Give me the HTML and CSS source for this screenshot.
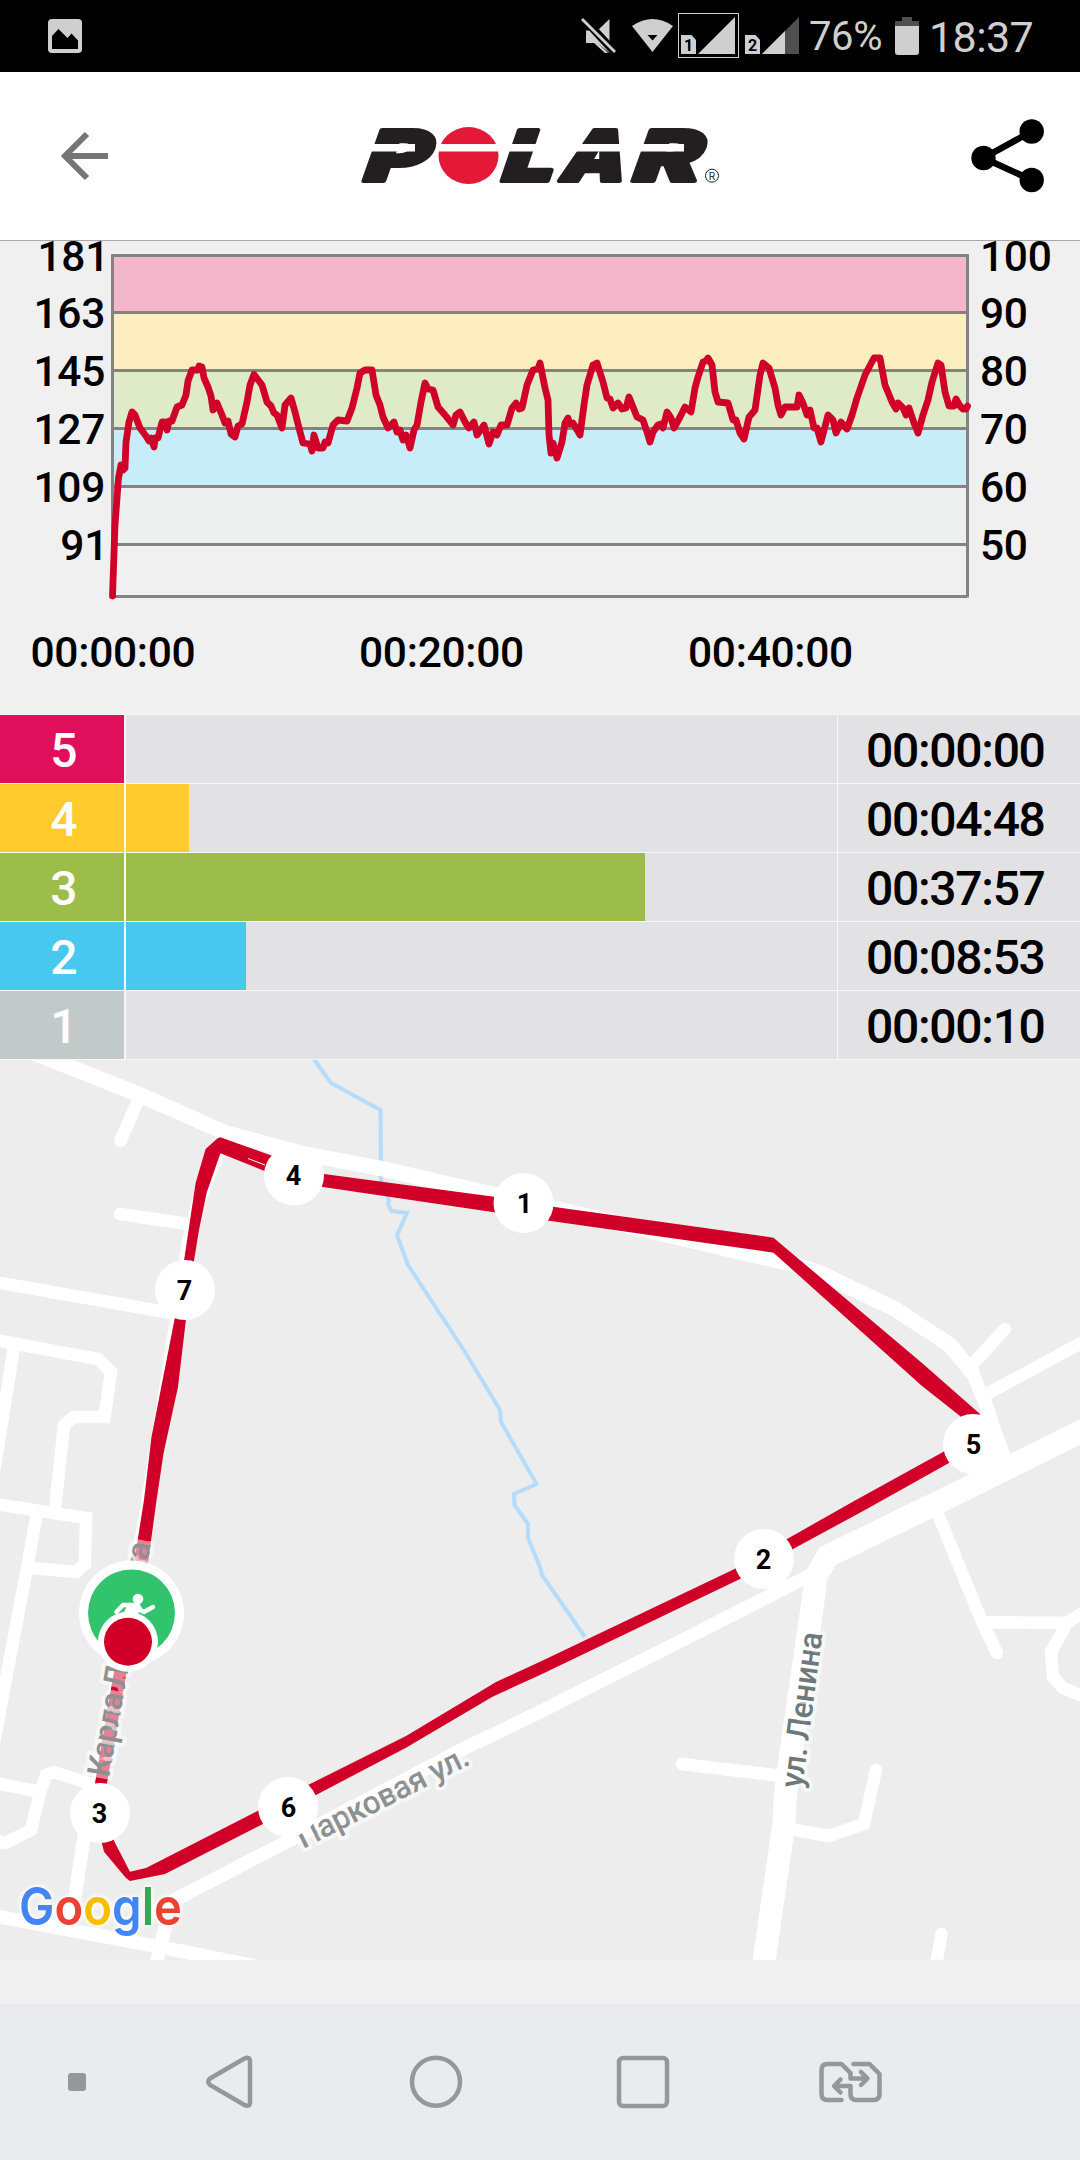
FILE: index.html
```html
<!DOCTYPE html>
<html lang="ru">
<head>
    <meta charset="UTF-8">
    <title>Polar</title>
    <link rel="stylesheet" href="styles.css">
</head>
<body>

<div class="status-bar">
    <svg class="icon-picture" width="34" height="34" viewBox="0 0 34 34">
        <rect width="34" height="34" rx="4"/>
        <path class="cut" d="M4 30V17l6.500-7 9 9 4-4.500 6.500 7V30z"/>
    </svg>
    <div class="status-right">
        <svg width="222" height="72" viewBox="580 0 222 72">
            <!-- sound off -->
            <path d="M586 30.500h11.500L609.500 19v34l-12-10H586z"/>
            <path class="cut-line" d="M584 19l31 33.500" stroke-width="8"/>
            <path d="M583 18l-2 2 33 33 2-2z"/>
            <path d="M586 31l22 22h-3l-11-10h-8z"/>
            <!-- wifi -->
            <path d="M652.500 52L632 26q20.500-14 41 0z"/>
            <path class="cut" d="M647.500 35h10l-5 5.500z"/>
            <!-- sim cards -->
            <rect class="sim-frame" x="678.500" y="13.500" width="60" height="44"/>
            <path d="M681 35h10.500l4.500 5v14h-15z"/>
            <path d="M698 54h37V17z"/>
            <path d="M745 35h10.500l4.500 5v14h-15z"/>
            <path class="dim" d="M762 54h37V17z"/>
            <path d="M762 54h23V31z"/>
            <text class="sim-num" x="684" y="51">1</text>
            <text class="sim-num" x="748" y="51">2</text>
        </svg>
        <span class="percent">76%</span>
        <svg class="icon-battery" width="24" height="38" viewBox="0 0 24 38">
            <path class="dim" d="M7 0h10v4h7v6H0V4h7z"/>
            <path d="M0 9h24v26q0 3-3 3H3q-3 0-3-3z"/>
        </svg>
        <span class="clock">18:37</span>
    </div>
</div>

<header>
    <svg class="btn-back" width="50" height="50" viewBox="60 131 50 50">
        <path d="M108 156H65M87 134l-22 22 22 22"/>
    </svg>
    <svg class="logo" width="362" height="64" viewBox="360 124 362 64">
        <text transform="translate(364 181) skewX(-7)" textLength="64" lengthAdjust="spacingAndGlyphs">P</text>
        <ellipse class="logo-ball" cx="468.500" cy="155.500" rx="30" ry="28.500"/>
        <text transform="translate(502 181) skewX(-7)" textLength="52" lengthAdjust="spacingAndGlyphs">L</text>
        <text transform="translate(561 181) skewX(-7)" textLength="64" lengthAdjust="spacingAndGlyphs">A</text>
        <text transform="translate(633 181) skewX(-7)" textLength="67" lengthAdjust="spacingAndGlyphs">R</text>
        <path class="logo-stripe" d="M360 144h55v7.500h-55zM436 144h248v7.500H436z"/>
        <circle class="logo-r" cx="712" cy="175.700" r="6.500"/>
        <text class="logo-reg" x="708.800" y="179.500">R</text>
    </svg>
    <svg class="btn-share" width="74" height="74" viewBox="971 118.500 74 74">
        <path d="M1031.700 131l-48.200 26.500 48.200 22"/>
        <circle cx="1031.700" cy="131" r="12.200"/>
        <circle cx="983.500" cy="157.500" r="12.200"/>
        <circle cx="1031.700" cy="179.500" r="12.200"/>
    </svg>
</header>

<section class="hr-chart">
    <svg width="1080" height="473" viewBox="0 241 1080 473">
        <rect class="band5" x="112" y="256" width="855" height="57"/>
        <rect class="band4" x="112" y="312" width="855" height="58"/>
        <rect class="band3" x="112" y="370" width="855" height="58"/>
        <rect class="band2" x="112" y="428" width="855" height="58"/>
        <rect class="band1" x="112" y="486" width="855" height="58"/>
        <path class="axis" d="M112.500 597V255.500h855V597.500M112 312.500h855M112 370.500h855M112 428.500h855M112 486.500h855M112 544.500h855M112 596.500h855"/>

        <g class="labels-left">
            <text x="109" y="270.500">181</text>
            <text x="105" y="327.500">163</text>
            <text x="105" y="385.500">145</text>
            <text x="105" y="443.500">127</text>
            <text x="105" y="501.500">109</text>
            <text x="108" y="559.500">91</text>
        </g>
        <g class="labels-right">
            <text x="980" y="270.500">100</text>
            <text x="980" y="327.500">90</text>
            <text x="980" y="385.500">80</text>
            <text x="980" y="443.500">70</text>
            <text x="980" y="501.500">60</text>
            <text x="980" y="559.500">50</text>
        </g>
        <g class="labels-time">
            <text x="113" y="667">00:00:00</text>
            <text x="441.500" y="667">00:20:00</text>
            <text x="770.500" y="667">00:40:00</text>
        </g>

        <polyline class="hr-line" points="112.500,596 115,525 118.500,478 121,465 123,470 125,468 126,442 129,422 132,412 135,415 140,428 146,436 149,441 151,438 154,447 155,438 158,438 162,422 165,422 167,430 169,421 172,421 177,407 182,405 186,395 188,381 192,370 198,370 199,366 202,367 204,378 208,387 211,396 213,410 217,403 222,415 225,423 228,421 231,434 235,437 238,426 242,424 247,402 250,385 254,374.500 262,385 267,402 271,406 274,413 277,415 282,428 285,405 291,398 295,412 299,428 303,443 310,444 312,451 314,435 318,448 323,448 325,442 328,443 333,425 338,420 347,421 352,408 357,388 360,373 365,370 372,370 376,395 380,405 383,417 388,428 394,422 397,432 400,430 403,440 406,435 410,448 414,430 417,425 421,402 425,383 428,389 433,390 438,407 445,415 453,425 456,415 460,412 465,422 469,428 474,422 477,435 484,425 489,444 493,432 497,435 501,425 507,425 512,408 516,403 519,409 522,408 527,385 533,370 538,369 540,363 545,388 548,400 549,435 551,453 553,443 557,458 562,442 565,423 568,418 570,424 573,423 580,435 584,405 587,385 593,365 597,363 603,382 607,398 610,399 613,408 618,403 622,409 626,408 629,397 637,417 643,420 647,432 650,442 653,432 658,425 661,424 663,428 667,412 671,418 674,428 680,417 685,407 691,412 695,388 698,377 703,362 706,361 708,358 712,365 715,392 718,402 728,403 731,413 733,420 736,420 740,433 744,439 749,417 755,410 760,375 763,363 769,368 775,388 778,405 781,415 785,407 797,407 799,395 803,403 807,415 810,410 814,428 817,428 821,442 828,415 833,420 836,433 841,422 847,429 852,415 857,398 865,375 874,358 880,358 885,385 892,402 896,409 898,403 903,408 906,415 909,408 914,423 918,433 923,415 928,400 932,382 938,363 941,365 945,392 949,406 954,406 956,399 960,406 963,409 966,409 967.500,406"/>
    </svg>
</section>

<section class="zones">
    <div class="zone zone5">
        <span class="num">5</span><span class="track"></span><span class="time">00:00:00</span>
    </div>
    <div class="zone zone4">
        <span class="num">4</span><span class="track"><i class="bar" style="width: 8.860%"></i></span><span class="time">00:04:48</span>
    </div>
    <div class="zone zone3">
        <span class="num">3</span><span class="track"><i class="bar" style="width: 73%"></i></span><span class="time">00:37:57</span>
    </div>
    <div class="zone zone2">
        <span class="num">2</span><span class="track"><i class="bar" style="width: 16.900%"></i></span><span class="time">00:08:53</span>
    </div>
    <div class="zone zone1">
        <span class="num">1</span><span class="track"></span><span class="time">00:00:10</span>
    </div>
</section>

<main class="map">
    <svg width="1080" height="900" viewBox="0 1060 1080 900">
        <path class="river" d="M313 1058l18 25 49.500 27 .5 70 8 20-1 4 3.500 7 15.500 2-10 22 11 30 57 87 35 58 1 12 35.500 62-22.500 10 .5 11 13.500 19v14l12 29 2 8 43 62"/>

        <g class="roads">
            <path class="w15" d="M10 1044l42 16 86 34 88 39 74 20 79 15 117 27 300 70 24 8 75 36 55 36 22 27"/>
            <path class="w13" d="M950 1345l22 27 16 38 16 52"/>
            <path class="solid" d="M981 1410l10-11 19 55-22 30-20-5z"/>
            <path d="M1005 1329l-35 38M985 1395l100-54"/>
            <path class="w23" d="M1090 1427l-147 73-115 56-13 22v9l-27 186-3 27-1 23-21 145"/>
            <path class="w13" d="M815 1573l-275 139-75 36-169 89-114 59-30 17M165 1928l-9 36"/>
            <path class="w13" d="M-5 1916l160 30 110 22"/>
            <path class="w13" d="M226 1138l-13 27-15 38-9 37-12 77-30 190-28 160-19 110-16 60-9 60-6 30"/>
            <path d="M139 1098l-18.500 43M120 1214l68 10M-5 1282l182 32"/>
            <path d="M-5 1340l103 19 13 13-6.500 45H74l-10 8-9 84M14 1347l-20 125"/>
            <path d="M-5 1504l91 14-1 46-9 8-45-4M37 1513l-10 55-35 185"/>
            <path d="M-5 1783l41 8M88 1783l-34-11-8 3-6 18-9 37-26 13-12-3"/>
            <path d="M937 1512l45.500 111 14.500 30M982 1622l85 1M1085 1611l-18 12-16 29 2 25 10 11 22 9"/>
            <path d="M682 1764l100 12M790 1829l38.500 7 35.500-12 12-54M941.500 1934l-6 34"/>
        </g>

        <path class="track-line" fill-rule="evenodd" d="M220.400 1137.300L270 1155 324 1174 494 1196.700 553 1206.700 773.500 1237.700 922 1363 980 1414 985 1445 949 1463 865 1510 793 1549 740 1579 540 1675 492.500 1696.700 406 1747.700 316 1795 263 1824 165 1874 130 1881 125.700 1877.700 104 1851.700 95 1815V1783L112 1683 134 1563 144 1500 151.500 1436.700 174.600 1319 184 1260.700 195.600 1183 205.600 1149 217.600 1138.300z
            M220.400 1153.300L206.600 1193 199 1230 194 1260.700 186 1319 178 1387 163.600 1453 156 1504 148 1563 127 1670 107 1783 113.600 1840 130 1871.700 146 1868 258 1810.700 310 1784 406 1736 496 1682 540 1661.700 734.500 1569 787 1539 855 1500.500 943 1452 970 1430 960 1416 922 1386 773.500 1252.700 549 1220.700 494 1212.300 323 1187 264.500 1171z"/>
        <path class="track-gap" d="M248 1158.500l17 6.500"/>

        <text class="street" transform="translate(109 1778) rotate(-79.900)" textLength="238">Карла Либкнехта</text>
        <text class="street" transform="translate(303 1849) rotate(-26.800)" textLength="189">Парковая ул.</text>
        <text class="street dark" transform="translate(802 1789) rotate(-82.500)" textLength="157">ул. Ленина</text>

        <text class="google" x="19" y="1925" textLength="163" lengthAdjust="spacingAndGlyphs"><tspan class="blue">G</tspan><tspan class="red">o</tspan><tspan class="yellow">o</tspan><tspan class="blue">g</tspan><tspan class="green">l</tspan><tspan class="red">e</tspan></text>

        <!-- kilometre marks -->
        <g class="km">
            <circle cx="523.500" cy="1203" r="30"/><text x="524.500" y="1212.500">1</text>
            <circle cx="764" cy="1559" r="30"/><text x="763.500" y="1568.500">2</text>
            <circle cx="100" cy="1813" r="30"/><text x="99.500" y="1822.500">3</text>
            <circle cx="294" cy="1175.500" r="30"/><text x="293.500" y="1184.500">4</text>
            <circle cx="973" cy="1444" r="30"/><text x="973.500" y="1453.500">5</text>
            <circle cx="288" cy="1807" r="30"/><text x="288.500" y="1816.500">6</text>
            <circle cx="185" cy="1290" r="30"/><text x="184.500" y="1299.500">7</text>
        </g>

        <!-- start and current position -->
        <circle class="white" cx="131.500" cy="1613" r="52.500"/>
        <circle class="start" cx="131.500" cy="1613" r="43.500"/>
        <circle class="white" cx="138" cy="1599" r="5.300"/>
        <path class="runner" d="M116.500 1612l6.500-7h12M136 1608l8 4 9-5"/>
        <path class="white" d="M122 1603h17l4 7-6 4h-14l4-8z"/>
        <circle class="white" cx="128" cy="1641.700" r="30"/>
        <circle class="finish" cx="128" cy="1641.700" r="24"/>
    </svg>
</main>

<nav>
    <svg class="dot" width="18" height="18" viewBox="0 0 18 18"><rect width="18" height="18" rx="3"/></svg>
    <svg width="64" height="64" viewBox="197 2050 64 64">
        <path d="M210 2078.500l34-19.800q6-3 6 3v40q0 6-6 3l-34-19.800q-3.500-3.200 0-6.400z"/>
    </svg>
    <svg width="64" height="64" viewBox="404 2050 64 64"><circle cx="436" cy="2081.700" r="24"/></svg>
    <svg width="64" height="64" viewBox="611 2050 64 64"><rect x="619" y="2058" width="48" height="48" rx="4"/></svg>
    <svg class="sim-switch" width="64" height="64" viewBox="818.500 2050 64 64">
        <path d="M842 2100h-14q-6 0-6-6v-24q0-6 6-6h14l9 9v5.500h16M861.500 2072l6.500 6.500-6.500 6.500"/>
        <path d="M854 2064h16l10 10v20q0 6-6 6h-17q-6 0-6-6v-8h-16M841 2079.500l-6.500 6.500 6.500 6.500"/>
    </svg>
</nav>

</body>
</html>
```
FILE: styles.css
```css
* {
    box-sizing: border-box;
    margin: 0;
    padding: 0;
}
body {
    width: 1080px;
    height: 2160px;
    overflow: hidden;
    display: flex;
    flex-direction: column;
    background-color: #f0f0f0;
    font-family: Roboto, "Liberation Sans", sans-serif;
}
svg {
    display: block;
    flex-shrink: 0;
}

/* status bar */
.status-bar {
    height: 72px;
    padding: 0 46px 0 48px;
    display: flex;
    align-items: center;
    justify-content: space-between;
    background-color: #000;
    color: #cfcfcf;
    fill: #cfcfcf;
}
.status-right {
    display: flex;
    align-items: center;
}
.cut { fill: #000; }
.cut-line { stroke: #000; }
.dim { fill: #4f4f4f; }
.sim-frame {
    fill: none;
    stroke: #cfcfcf;
}
.sim-num {
    font-size: 16px;
    font-weight: 700;
    fill: #000;
}
.percent {
    width: 86px;
    margin-left: 7px;
    font-size: 40px;
    letter-spacing: -.4px;
    padding-top: 1px;
}
.clock {
    width: 104px;
    margin-left: 10px;
    margin-right: 1px;
    font-size: 43px;
    letter-spacing: -.6px;
    padding-top: 1px;
}

/* header */
header {
    height: 169px;
    padding: 0 35px 0 60px;
    display: flex;
    align-items: center;
    justify-content: space-between;
    background-color: #fff;
    border-bottom: 1px solid #a8a8a8;
}
.btn-back {
    fill: none;
    stroke: #767676;
    stroke-width: 6;
}
.btn-share path {
    fill: none;
    stroke: #000;
    stroke-width: 6.5;
}
.logo {
    margin-left: 1px;
    overflow: visible;
}
.logo text {
    font-family: Inter, sans-serif;
    font-size: 70px;
    font-weight: 900;
    font-style: italic;
    fill: #231f20;
    stroke: #231f20;
    stroke-width: 4;
    stroke-linejoin: round;
}
.logo .logo-reg {
    font-size: 10px;
    font-weight: 400;
    font-style: normal;
    stroke: none;
}
.logo-ball { fill: #e41937; }
.logo-stripe { fill: #fff; }
.logo-r {
    fill: none;
    stroke: #231f20;
}

/* heart rate chart */
.hr-chart {
    height: 473px;
    font-size: 42.5px;
    font-weight: 500;
    letter-spacing: -.3px;
}
.band5 { fill: #f4b6cb; }
.band4 { fill: #fdeebf; }
.band3 { fill: #dfebc8; }
.band2 { fill: #c7edf8; }
.band1 { fill: #eeefef; }
.axis {
    fill: none;
    stroke: #838383;
    stroke-width: 3;
}
.labels-left { text-anchor: end; }
.labels-time { text-anchor: middle; }
.hr-line {
    fill: none;
    stroke: #d10029;
    stroke-width: 6.8;
    stroke-linecap: round;
    stroke-linejoin: round;
}

/* zones */
.zones {
    border-top: 1px solid #f7f7f7;
}
.zone {
    height: 69px;
    display: grid;
    grid-template-columns: 126px 711px 243px;
    background-color: #e2e2e4;
    border-bottom: 1px solid #f7f7f7;
    font-size: 48px;
}
.zone > span {
    height: 68px;
}
.num {
    padding-left: 4px;
    border-right: 2px solid #f7f7f7;
    line-height: 71px;
    text-align: center;
    color: #fff;
    font-weight: 500;
}
.time {
    padding-left: 28px;
    border-left: 1px solid #f7f7f7;
    line-height: 71px;
    font-weight: 500;
    letter-spacing: -1.3px;
}
.bar {
    display: block;
    height: 100%;
}
.zone5 .num { background-color: #df0f5b; }
.zone4 .num, .zone4 .bar { background-color: #ffcb2d; }
.zone3 .num, .zone3 .bar { background-color: #9dbd4b; }
.zone2 .num, .zone2 .bar { background-color: #48c7ef; }
.zone1 .num { background-color: #c1cac8; }

/* map */
.map {
    height: 900px;
    background-color: #ededed;
}
.river {
    fill: none;
    stroke: #b5dcfa;
    stroke-width: 4;
}
.roads {
    fill: none;
    stroke: #fff;
    stroke-width: 12.5;
    stroke-linecap: round;
}
.w13 { stroke-width: 13.5; }
.w15 { stroke-width: 15.5; }
.w23 { stroke-width: 23; }
.solid {
    fill: #fff;
    stroke: none;
}
.track-line { fill: #d10029; }
.track-gap { stroke: #fff; }
.street {
    font-size: 32px;
    font-weight: 500;
    fill: #8c9091;
    stroke: rgba(255, 255, 255, .5);
    stroke-width: 8;
    stroke-linejoin: round;
    paint-order: stroke;
}
.street.dark { fill: #6d7979; }
.google {
    font-family: Inter, sans-serif;
    font-size: 52px;
    font-weight: 600;
    filter: drop-shadow(0 0 2px #fff) drop-shadow(0 0 2px #fff);
}
.blue { fill: #4285f4; }
.red { fill: #ea4335; }
.yellow { fill: #fbbc05; }
.green { fill: #34a853; }
.km circle, .white { fill: #fff; }
.km text {
    font-size: 27px;
    font-weight: 700;
    text-anchor: middle;
}
.start { fill: #32c46c; }
.finish { fill: #d10029; }
.runner {
    fill: none;
    stroke: #fff;
    stroke-width: 4.5;
    stroke-linecap: round;
}

/* navigation */
nav {
    height: 156px;
    margin-top: 44px;
    padding-left: 68px;
    display: flex;
    align-items: center;
    background-color: #e9ebee;
    fill: none;
    stroke: #969798;
    stroke-width: 4.5;
}
nav svg {
    margin-right: 143px;
}
nav .dot {
    margin-right: 111px;
    fill: #969798;
    stroke: none;
}
.sim-switch {
    stroke-linecap: round;
    stroke-linejoin: round;
}
```
